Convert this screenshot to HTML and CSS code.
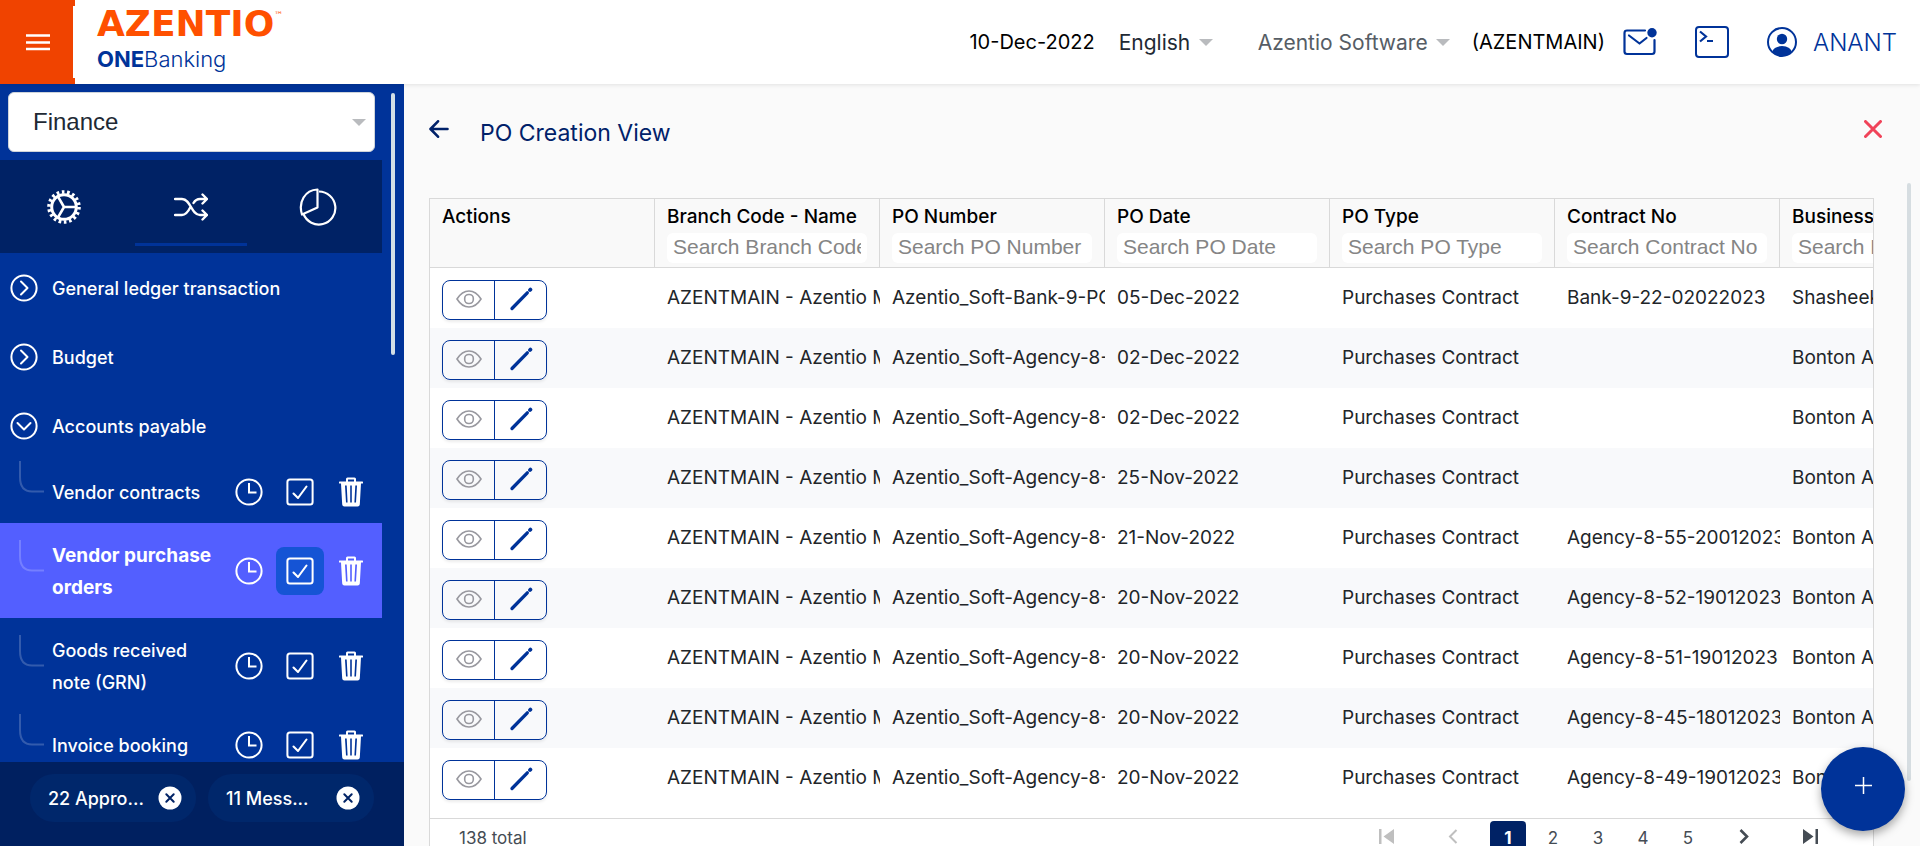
FILE: index.html
```html
<!DOCTYPE html>
<html lang="en">
<head>
<meta charset="utf-8">
<title>PO Creation View - Azentio ONEBanking</title>
<link rel="stylesheet" href="styles.css">
</head>
<body>
<svg class="sprite" aria-hidden="true">
  <symbol id="i-right" viewBox="0 0 28 28"><circle cx="14" cy="14" r="12.600" fill="none" stroke="currentColor" stroke-width="2"/><path d="M11 7.500l6.500 6.500-6.500 6.500" fill="none" stroke="currentColor" stroke-width="2" stroke-linecap="round" stroke-linejoin="round"/></symbol>
  <symbol id="i-down" viewBox="0 0 28 28"><circle cx="14" cy="14" r="12.600" fill="none" stroke="currentColor" stroke-width="2"/><path d="M7.500 11l6.500 6.500 6.500-6.500" fill="none" stroke="currentColor" stroke-width="2" stroke-linecap="round" stroke-linejoin="round"/></symbol>
  <symbol id="i-branch" viewBox="0 0 25 62"><path d="M1 0v16q0 14.500 12 14.500h12" fill="none" stroke="#fff" stroke-opacity=".2" stroke-width="2"/></symbol>
  <symbol id="i-clock" viewBox="0 0 28 28"><circle cx="14" cy="14" r="12.600" fill="none" stroke="currentColor" stroke-width="2"/><path d="M14 5v9.500h7.500" fill="none" stroke="currentColor" stroke-width="2"/></symbol>
  <symbol id="i-check" viewBox="0 0 28 28"><rect x="1.400" y="1.400" width="25.200" height="25.200" rx="2.500" fill="none" stroke="currentColor" stroke-width="2"/><path d="M7.500 15.500l4.500 4.500 8.500-11.500" fill="none" stroke="currentColor" stroke-width="2.100" stroke-linecap="round" stroke-linejoin="round"/></symbol>
  <symbol id="i-trash" viewBox="0 0 26 30"><path fill="currentColor" fill-rule="evenodd" d="M9.500.5h7Q18 .5 18 2v2.500h6.500q.5 0 .5.700v.8q0 .5-.500.500H23L21.800 27.500q-.2 2-2.200 2H6.400q-2 0-2.200-2L3 6.500H1.500Q1 6.500 1 6V5.200q0-.7.500-.7H8V2Q8 .5 9.500.5ZM10 2.500v2h6v-2ZM7 8.500l1 17h1.600L8.700 8.500ZM12.200 8.500v17h1.600v-17ZM17.300 8.500l-.9 17H18l1-17Z"/></symbol>
  <symbol id="i-x" viewBox="0 0 24 24"><circle cx="12" cy="12" r="11.500" fill="#fff"/><path d="M8.300 8.300l7.400 7.400M15.700 8.300l-7.400 7.400" stroke="#002265" stroke-width="2" stroke-linecap="round"/></symbol>
  <symbol id="i-eye" viewBox="0 0 26 18"><path d="M1 9Q6 1 13 1t12 8q-5 8-12 8T1 9Z" fill="none" stroke="currentColor" stroke-width="1.600"/><rect x="8.700" y="4.500" width="8.600" height="9" rx="4" fill="none" stroke="currentColor" stroke-width="1.600"/></symbol>
  <symbol id="i-pen" viewBox="0 0 24 24"><path d="M3 21.500L18.300 5.800" stroke="currentColor" stroke-width="3.300" stroke-linecap="round"/><path d="M1.600 23l2-3.500 1.500 1.500Z" fill="currentColor"/><path d="M21 3l.4-.4" stroke="currentColor" stroke-width="3.800" stroke-linecap="round"/></symbol>
</svg>

<header class="topbar">
  <button class="menu" aria-label="Menu"><svg width="24" height="18" viewBox="0 0 24 18"><path d="M0 2.500h24M0 9.500h24M0 16h24" stroke="#fff" stroke-width="2.400"/></svg></button>
  <div class="brand">
    <div class="brand-name">AZENTIO<sup>™</sup></div>
    <div class="brand-product"><b>ONE</b>Banking</div>
  </div>
  <div class="tools">
    <span class="date">10-Dec-2022</span>
    <span class="pick pick-lang"><select aria-label="Language"><option>English</option></select></span>
    <span class="pick pick-org"><select aria-label="Organisation"><option>Azentio Software</option></select></span>
    <span class="branch-code">(AZENTMAIN)</span>
    <button class="tool" aria-label="Messages"><svg width="34" height="28" viewBox="0 0 34 28"><path d="M22 2.500H4Q1.500 2.500 1.500 5v18.500Q1.500 26 4 26h25q2.500 0 2.500-2.500V12" fill="none" stroke="currentColor" stroke-width="2.200" stroke-linecap="round"/><path d="M6 7.500l10.500 8 7-5.500" fill="none" stroke="currentColor" stroke-width="2.200" stroke-linecap="round" stroke-linejoin="round"/><circle cx="29" cy="4.800" r="4.700" fill="currentColor"/></svg></button>
    <button class="tool" aria-label="Console"><svg width="34" height="32" viewBox="0 0 34 32"><rect x="1" y="1" width="32" height="30" rx="3" fill="none" stroke="currentColor" stroke-width="2"/><path d="M5 5.500l6 5L5 15.500M12 15h6" fill="none" stroke="currentColor" stroke-width="2.200"/></svg></button>
    <a class="user" href="#"><svg width="30" height="30" viewBox="0 0 30 30"><clipPath id="u"><circle cx="15" cy="15" r="14"/></clipPath><circle cx="15" cy="15" r="14" fill="none" stroke="currentColor" stroke-width="2"/><circle cx="15" cy="12" r="5.200" fill="currentColor"/><ellipse cx="15" cy="26" rx="10" ry="7" fill="currentColor" clip-path="url(#u)"/></svg>ANANT</a>
  </div>
</header>

<div class="shell">
  <aside class="side">
    <div class="side-scroll">
      <div class="side-body">
        <span class="pick module"><select aria-label="Module"><option>Finance</option></select></span>
        <nav class="tabs" aria-label="Sections">
          <button class="tab" aria-label="Setup"><svg width="34" height="34" viewBox="-17 -17 34 34"><circle r="12.300" fill="none" stroke="#fff" stroke-width="3"/><circle r="15" fill="none" stroke="#fff" stroke-width="3.600" stroke-dasharray="2.620 2.616"/><path d="M0 0h12M0 0l-6-10.400M0 0l-6 10.400" stroke="#fff" stroke-width="2.600"/></svg></button>
          <button class="tab tab-on" aria-label="Transactions"><svg width="34" height="28" viewBox="0 0 34 28" fill="none" stroke="#fff" stroke-width="2.400" stroke-linecap="round" stroke-linejoin="round"><path d="M1 6h7c9 0 9 16 18 16h7M1 22h7c4 0 6-3 8.500-8M19.500 10c1.500-2.500 3.500-4 6.500-4h7M28.500 1.500L33 6l-4.500 4.500M28.500 17.500L33 22l-4.500 4.500"/></svg></button>
          <button class="tab" aria-label="Reports"><svg width="38" height="38" viewBox="0 0 38 38" fill="none" stroke="#fff" stroke-width="2.200" stroke-linejoin="round"><path d="M20 3.500A16.500 16.500 0 1 1 4.500 26"/><path d="M18.500 1.500v18L3 26.500C-1 14 6 2 18.500 1.500Z"/></svg></button>
        </nav>
        <ul class="tree">
          <li><a class="group" href="#"><svg><use href="#i-right"/></svg><span>General ledger transaction</span></a></li>
          <li><a class="group" href="#"><svg><use href="#i-right"/></svg><span>Budget</span></a></li>
          <li><a class="group" href="#"><svg><use href="#i-down"/></svg><span>Accounts payable</span></a></li>
          <li class="leaf"><svg class="elbow"><use href="#i-branch"/></svg><a href="#">Vendor contracts</a><button aria-label="History"><svg><use href="#i-clock"/></svg></button><button aria-label="Approve"><svg><use href="#i-check"/></svg></button><button aria-label="Delete"><svg class="bin"><use href="#i-trash"/></svg></button></li>
          <li class="leaf leaf-on"><svg class="elbow"><use href="#i-branch"/></svg><a href="#">Vendor purchase orders</a><button aria-label="History"><svg><use href="#i-clock"/></svg></button><button class="on" aria-label="Approve"><svg><use href="#i-check"/></svg></button><button aria-label="Delete"><svg class="bin"><use href="#i-trash"/></svg></button></li>
          <li class="leaf"><svg class="elbow"><use href="#i-branch"/></svg><a href="#">Goods received note (GRN)</a><button aria-label="History"><svg><use href="#i-clock"/></svg></button><button aria-label="Approve"><svg><use href="#i-check"/></svg></button><button aria-label="Delete"><svg class="bin"><use href="#i-trash"/></svg></button></li>
          <li class="leaf"><svg class="elbow"><use href="#i-branch"/></svg><a href="#">Invoice booking</a><button aria-label="History"><svg><use href="#i-clock"/></svg></button><button aria-label="Approve"><svg><use href="#i-check"/></svg></button><button aria-label="Delete"><svg class="bin"><use href="#i-trash"/></svg></button></li>
        </ul>
      </div>
      <div class="side-thumb"></div>
    </div>
    <div class="chips">
      <div class="chip"><span>22 Appro...</span><button aria-label="Dismiss approvals"><svg><use href="#i-x"/></svg></button></div>
      <div class="chip"><span>11 Mess...</span><button aria-label="Dismiss messages"><svg><use href="#i-x"/></svg></button></div>
    </div>
  </aside>

  <main class="page">
    <div class="page-head">
      <button class="back" aria-label="Back"><svg width="20" height="18" viewBox="0 0 20 18"><path d="M9 1.300L1.500 9 9 16.700M2 9h16.500" fill="none" stroke="#002169" stroke-width="2.600" stroke-linecap="round" stroke-linejoin="round"/></svg></button>
      <h1>PO Creation View</h1>
      <button class="close" aria-label="Close"><svg width="18" height="18" viewBox="0 0 18 18"><path d="M1.500 1.500l15 15M16.500 1.500l-15 15" stroke="#f04359" stroke-width="3" stroke-linecap="round"/></svg></button>
    </div>
    <div class="page-body">
      <section class="grid">
        <div class="grid-view">
          <table>
            <thead>
              <tr>
                <th>Actions</th>
                <th><label for="f1">Branch Code - Name</label><input id="f1" placeholder="Search Branch Code - Name"></th>
                <th><label for="f2">PO Number</label><input id="f2" placeholder="Search PO Number"></th>
                <th><label for="f3">PO Date</label><input id="f3" placeholder="Search PO Date"></th>
                <th><label for="f4">PO Type</label><input id="f4" placeholder="Search PO Type"></th>
                <th><label for="f5">Contract No</label><input id="f5" placeholder="Search Contract No"></th>
                <th><label for="f6">Business Partner</label><input id="f6" placeholder="Search Business Partner"></th>
              </tr>
            </thead>
            <tbody>
              <tr><td><div class="acts"><button aria-label="View"><svg class="eye"><use href="#i-eye"/></svg></button><button aria-label="Edit"><svg class="pen"><use href="#i-pen"/></svg></button></div></td><td>AZENTMAIN - Azentio Main</td><td>Azentio_Soft-Bank-9-PO</td><td>05-Dec-2022</td><td>Purchases Contract</td><td>Bank-9-22-02022023</td><td>Shasheek</td></tr>
              <tr><td><div class="acts"><button aria-label="View"><svg class="eye"><use href="#i-eye"/></svg></button><button aria-label="Edit"><svg class="pen"><use href="#i-pen"/></svg></button></div></td><td>AZENTMAIN - Azentio Main</td><td>Azentio_Soft-Agency-8-PO</td><td>02-Dec-2022</td><td>Purchases Contract</td><td></td><td>Bonton Agency</td></tr>
              <tr><td><div class="acts"><button aria-label="View"><svg class="eye"><use href="#i-eye"/></svg></button><button aria-label="Edit"><svg class="pen"><use href="#i-pen"/></svg></button></div></td><td>AZENTMAIN - Azentio Main</td><td>Azentio_Soft-Agency-8-PO</td><td>02-Dec-2022</td><td>Purchases Contract</td><td></td><td>Bonton Agency</td></tr>
              <tr><td><div class="acts"><button aria-label="View"><svg class="eye"><use href="#i-eye"/></svg></button><button aria-label="Edit"><svg class="pen"><use href="#i-pen"/></svg></button></div></td><td>AZENTMAIN - Azentio Main</td><td>Azentio_Soft-Agency-8-PO</td><td>25-Nov-2022</td><td>Purchases Contract</td><td></td><td>Bonton Agency</td></tr>
              <tr><td><div class="acts"><button aria-label="View"><svg class="eye"><use href="#i-eye"/></svg></button><button aria-label="Edit"><svg class="pen"><use href="#i-pen"/></svg></button></div></td><td>AZENTMAIN - Azentio Main</td><td>Azentio_Soft-Agency-8-PO</td><td>21-Nov-2022</td><td>Purchases Contract</td><td>Agency-8-55-20012023</td><td>Bonton Agency</td></tr>
              <tr><td><div class="acts"><button aria-label="View"><svg class="eye"><use href="#i-eye"/></svg></button><button aria-label="Edit"><svg class="pen"><use href="#i-pen"/></svg></button></div></td><td>AZENTMAIN - Azentio Main</td><td>Azentio_Soft-Agency-8-PO</td><td>20-Nov-2022</td><td>Purchases Contract</td><td>Agency-8-52-19012023</td><td>Bonton Agency</td></tr>
              <tr><td><div class="acts"><button aria-label="View"><svg class="eye"><use href="#i-eye"/></svg></button><button aria-label="Edit"><svg class="pen"><use href="#i-pen"/></svg></button></div></td><td>AZENTMAIN - Azentio Main</td><td>Azentio_Soft-Agency-8-PO</td><td>20-Nov-2022</td><td>Purchases Contract</td><td>Agency-8-51-19012023</td><td>Bonton Agency</td></tr>
              <tr><td><div class="acts"><button aria-label="View"><svg class="eye"><use href="#i-eye"/></svg></button><button aria-label="Edit"><svg class="pen"><use href="#i-pen"/></svg></button></div></td><td>AZENTMAIN - Azentio Main</td><td>Azentio_Soft-Agency-8-PO</td><td>20-Nov-2022</td><td>Purchases Contract</td><td>Agency-8-45-18012023</td><td>Bonton Agency</td></tr>
              <tr><td><div class="acts"><button aria-label="View"><svg class="eye"><use href="#i-eye"/></svg></button><button aria-label="Edit"><svg class="pen"><use href="#i-pen"/></svg></button></div></td><td>AZENTMAIN - Azentio Main</td><td>Azentio_Soft-Agency-8-PO</td><td>20-Nov-2022</td><td>Purchases Contract</td><td>Agency-8-49-19012023</td><td>Bonton Agency</td></tr>
            </tbody>
          </table>
        </div>
        <footer class="pager">
          <span class="total">138 total</span>
          <button class="step off" aria-label="First page"><svg width="16" height="15" viewBox="0 0 16 15"><path d="M0 0h2.500v15H0ZM15 0v15L4.500 7.500Z" fill="currentColor"/></svg></button>
          <button class="step off" aria-label="Previous page"><svg width="10" height="15" viewBox="0 0 10 15"><path d="M8.500 1L2 7.500 8.500 14" fill="none" stroke="currentColor" stroke-width="2"/></svg></button>
          <button class="num current">1</button>
          <button class="num">2</button>
          <button class="num">3</button>
          <button class="num">4</button>
          <button class="num">5</button>
          <button class="step" aria-label="Next page"><svg width="10" height="15" viewBox="0 0 10 15"><path d="M1.500 1L8 7.500 1.500 14" fill="none" stroke="currentColor" stroke-width="2.600"/></svg></button>
          <button class="step" aria-label="Last page"><svg width="16" height="15" viewBox="0 0 16 15"><path d="M13.500 0H16v15h-2.500ZM1 0v15l10.500-7.500Z" fill="currentColor"/></svg></button>
        </footer>
      </section>
      <div class="page-thumb"></div>
    </div>
    <button class="fab" aria-label="Add"><svg width="17" height="17" viewBox="0 0 17 17"><path d="M8.500 0v17M0 8.500h17" stroke="#fff" stroke-width="1.500"/></svg></button>
  </main>
</div>
</body>
</html>
```

FILE: styles.css
```css
* { box-sizing: border-box; }

body {
  margin: 0;
  height: 100vh;
  display: flex;
  flex-direction: column;
  overflow: hidden;
  background: #fafafa;
  font-family: Inter, "Liberation Sans", sans-serif;
  font-size: 19px;
  color: #212529;
}

button {
  display: flex;
  align-items: center;
  justify-content: center;
  margin: 0;
  padding: 0;
  border: 0;
  background: none;
  color: inherit;
  font: inherit;
}

a { color: inherit; text-decoration: none; }
svg { flex: none; display: block; }
.sprite { position: absolute; width: 0; height: 0; }

/* Top bar */
.topbar {
  flex: none;
  display: flex;
  height: 84px;
  background: #fff;
  box-shadow: 0 1px 4px rgba(0, 0, 0, .1);
  z-index: 1;
}

.menu {
  position: relative;
  width: 75px;
  background: #f04300;
}

.menu::after {
  content: "";
  position: absolute;
  top: 6px;
  right: 0;
  bottom: 6px;
  width: 2px;
  background: #fff;
}

.brand {
  padding: 4px 0 0 22px;
  white-space: nowrap;
}

.brand-name {
  font: bold 36px/40px "DejaVu Sans", sans-serif;
  color: #ff5000;
}

.brand-name sup {
  font-size: 9px;
  font-weight: normal;
  line-height: 1;
  vertical-align: 18px;
}

.brand-product {
  font-size: 22px;
  font-weight: 300;
  line-height: 30px;
  color: #039;
}

.brand-product b { font-weight: 700; }

.tools {
  display: flex;
  align-items: center;
  margin-left: auto;
  padding-right: 23px;
  color: #000;
  font-size: 20px;
}

.pick {
  position: relative;
  display: flex;
}

.pick::after {
  content: "";
  position: absolute;
  right: 0;
  top: 50%;
  margin-top: -3px;
  border: 7px solid transparent;
  border-top-color: #b9bbbe;
  border-bottom: 0;
  pointer-events: none;
}

.pick select {
  appearance: none;
  width: 100%;
  margin: 0;
  padding: 0 22px 0 0;
  border: 0;
  background: none;
  color: #212934;
  font: inherit;
  font-size: 21px;
}

.pick-lang { margin: 0 45px 0 24px; }
.pick-org { margin-right: 22px; }
.pick-org select { color: #565d65; }
.branch-code { margin-right: 18px; }

.tool { margin-right: 38px; color: #039; }

.user {
  display: flex;
  align-items: center;
  gap: 14px;
  color: #039;
  font-size: 24px;
  font-weight: 300;
}

.user svg { margin-right: 2px; }

/* Sidebar */
.shell {
  flex: 1;
  display: flex;
  min-height: 0;
}

.side {
  flex: none;
  display: flex;
  flex-direction: column;
  width: 404px;
  background: #039;
  color: #fff;
}

.side-scroll {
  flex: 1;
  display: flex;
  min-height: 0;
  overflow: hidden;
}

.side-body { width: 382px; }

.side-thumb {
  width: 4px;
  height: 262px;
  margin: 9px 0 0 9px;
  border-radius: 2px;
  background: #d3dfe6;
}

.module {
  height: 60px;
  margin: 8px 7px 8px 8px;
  border: 1px solid #ced4da;
  border-radius: 6px;
  background: #fff;
}

.module::after { right: 8px; }

.module select {
  padding: 0 22px 2px 24px;
  font: 24px "Liberation Sans", Arial, sans-serif;
}

.tabs {
  display: flex;
  height: 93px;
  background: #002265;
}

.tab {
  position: relative;
  flex: 1;
}

.tab-on::after {
  content: "";
  position: absolute;
  left: 8px;
  right: 8px;
  bottom: 7px;
  height: 3px;
  background: #039;
}

.tree {
  margin: 0;
  padding: 0;
  list-style: none;
  font-size: 18px;
  font-weight: 500;
}

.group {
  display: flex;
  align-items: center;
  gap: 14px;
  height: 69px;
  padding-left: 10px;
}

.group span { padding-top: 2px; }

.group svg, .leaf button svg { width: 28px; height: 28px; }
.leaf button svg.bin { width: 26px; height: 30px; }

.leaf {
  display: flex;
  align-items: center;
  gap: 3px;
  padding: 0 7px 0 19px;
  line-height: 32px;
}

.leaf a {
  flex: 1;
  padding: 17px 0 14px 5px;
}

.leaf button {
  width: 48px;
  height: 48px;
  border-radius: 8px;
}

.leaf .elbow { width: 25px; height: 62px; }

.leaf-on {
  background: #535fff;
  font-size: 19px;
  font-weight: 700;
}

.leaf .on { background: #1554d5; }

.chips {
  flex: none;
  display: flex;
  gap: 12px;
  height: 84px;
  padding: 12px 30px 24px;
  background: #002060;
  font-size: 18px;
  font-weight: 500;
}

.chip {
  flex: 1;
  display: flex;
  align-items: center;
  justify-content: space-between;
  padding: 0 14px 0 18px;
  border-radius: 24px;
  background: #00276b;
}

.chip svg { width: 24px; height: 24px; }

/* Page */
.page {
  position: relative;
  flex: 1;
  display: flex;
  flex-direction: column;
  min-width: 0;
  overflow: hidden;
}

.page-head {
  flex: none;
  display: flex;
  align-items: center;
  height: 89px;
  padding: 0 38px 0 25px;
}

h1 {
  flex: 1;
  margin: 9px 0 0 31px;
  color: #002169;
  font-size: 23px;
  font-weight: 400;
}

.page-body {
  flex: 1;
  display: flex;
  align-items: flex-start;
  min-height: 0;
  padding: 10px 9px 0 25px;
}

.page-thumb {
  width: 4px;
  height: 598px;
  border-radius: 2px;
  background: #d6dde1;
}

.grid {
  flex: 1;
  min-width: 0;
  margin: 15px 33px 0 0;
  border: 1px solid #d9d9d9;
  background: #fff;
}

.grid-view {
  overflow: hidden;
  padding-bottom: 10px;
}

table {
  width: 1575px;
  table-layout: fixed;
  border-collapse: separate;
  border-spacing: 0;
  white-space: nowrap;
}

th {
  height: 69px;
  padding: 5px 12px 0;
  border-right: 1px solid #d9d9d9;
  border-bottom: 1px solid #d9d9d9;
  background: #f9f9f9;
  color: #000;
  font-weight: 500;
  line-height: 25px;
  text-align: left;
  vertical-align: top;
}

th label { display: block; }

th input {
  display: block;
  width: 100%;
  height: 30px;
  margin-top: 4px;
  padding: 0 6px 2px;
  border: 0;
  border-radius: 6px;
  background: #fff;
  font: 21px "Liberation Sans", Arial, sans-serif;
}

th input::placeholder { color: #858585; }

td {
  height: 60px;
  padding: 0 0 2px 12px;
  overflow: hidden;
}

tbody tr:nth-child(even) { background: #f8f9fb; }

.acts {
  display: flex;
  width: 105px;
  height: 40px;
  margin-top: 6px;
  border: 1px solid #039;
  border-radius: 8px;
  box-shadow: 0 2px 3px rgba(0, 0, 0, .08);
  color: #039;
}

.acts button { flex: 1; }
.acts button + button { border-left: 1px solid #039; }
.eye { width: 26px; height: 18px; margin-bottom: 2px; color: #98989f; }
.pen { width: 24px; height: 24px; margin-bottom: 2px; }

.pager {
  display: flex;
  gap: 9px;
  height: 60px;
  padding: 2px 35px 0 29px;
  border-top: 1px solid #d9d9d9;
  color: #454c54;
  font-size: 17px;
}

.total { margin: 7px auto 0 0; }

.num {
  width: 36px;
  height: 34px;
  border-radius: 4px;
}

.current {
  background: #002265;
  color: #fff;
  font-weight: 700;
}

.step { width: 57px; height: 31px; }
.off { color: #bfbfbf; }

.fab {
  position: absolute;
  right: 15px;
  bottom: 15px;
  width: 84px;
  height: 84px;
  padding-bottom: 7px;
  border-radius: 50%;
  background: #039;
  box-shadow: 0 4px 10px rgba(0, 0, 0, .35);
}
```
